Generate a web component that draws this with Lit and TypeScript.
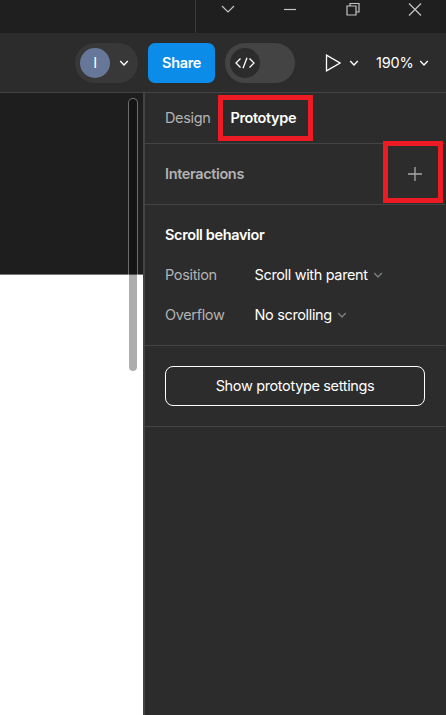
import { LitElement, html, css, svg } from "lit";
import { customElement } from "lit/decorators.js";

const chevron = (cls: string) => html`<svg class=${cls} width="10" height="6" viewBox="0 0 10 6">
  <path d="M1.200 1.100L5 4.900l3.800-3.800" fill="none" stroke="currentColor" stroke-width="1.400" /></svg>`;

@customElement("app-root")
export class AppRoot extends LitElement {
  static styles = css`
    :host {
      display: flex; flex-direction: column; position: relative;
      width: 446px; height: 715px; overflow: hidden; background: #2c2c2c; color: #fff;
      font: 420 14.5px/20px Inter, "Liberation Sans", sans-serif; letter-spacing: -0.35px; white-space: nowrap;
    }
    * { box-sizing: border-box; }
    svg { display: block; flex: none; }
    .titlebar { display: flex; height: 33px; background: #1f1f1f; flex: none; }
    .drag { flex: none; width: 196px; border-right: 1px solid #393939; }
    .window { display: flex; gap: 48.5px; padding: 1px 0 0 24.5px; color: #c4c4c4; }
    .toolbar { display: flex; align-items: center; height: 60px; padding-left: 75px; border-bottom: 1px solid #444; flex: none; }
    .user { display: flex; align-items: center; width: 63px; height: 40px; border-radius: 20px; background: #383838; padding-left: 5px; }
    .avatar { width: 30px; height: 30px; border-radius: 50%; background: #667799; text-align: center; line-height: 30px; margin-right: 9px; }
    .share { width: 67px; height: 40px; border-radius: 7px; background: #0c8ce9; text-align: center; line-height: 40px; font-weight: 600; margin: 0 10px; }
    .toggle { display: flex; align-items: center; width: 70px; height: 40px; border-radius: 20px; background: #444; padding-left: 5px; }
    .knob { display: flex; align-items: center; justify-content: center; width: 30px; height: 30px; border-radius: 50%; background: #2c2c2c; }
    .play { margin: 0 8px 0 30px; }
    .zoom { margin: 0 6px 0 17px; width: 37px; letter-spacing: -0.15px; }
    .body { display: flex; flex: 1; }
    .canvas { position: relative; width: 143px; background: linear-gradient(#1e1e1e 181px, #777 181px 182px, #fff 182px); }
    .scroll { position: absolute; left: 128px; top: 5px; width: 10px; height: 274px; border-radius: 5px;
      border: 1px solid rgba(255,255,255,.35); background: rgba(0,0,0,.32); background-clip: padding-box; }
    .panel { flex: 1; border-left: 2px solid #444; padding-right: 1px; }
    .section { border-bottom: 1px solid #444; padding: 0 20px; }
    .tabs { display: flex; align-items: center; height: 51px; gap: 20px; }
    .muted { color: #b3b3b3; }
    .strong { font-weight: 600; letter-spacing: -0.37px; }
    .interactions { display: flex; align-items: center; justify-content: space-between; height: 61px; color: #b3b3b3; padding-right: 23px; }
    .behavior { height: 141px; padding-top: 20px; }
    .row { display: flex; align-items: center; height: 20px; margin-top: 20px; }
    .row .muted { width: 89.5px; }
    .small { color: #7f7f7f; margin-left: 5px; }
    .settings { height: 81px; padding-top: 20px; }
    .button { height: 40px; border: 1px solid #fff; border-radius: 8px; line-height: 38px; text-align: center; }
    .mark { position: absolute; border: 5px solid #ed1c24; }
    .mark-tab { left: 218px; top: 95px; width: 95px; height: 46px; }
    .mark-plus { left: 383px; top: 141px; width: 60px; height: 62px; }
  `;

  render() {
    const glyphs = [
      svg`<path d="M1 5l6 6 6-6" />`,
      svg`<path d="M1 8.500h12" />`,
      svg`<path d="M1 5h9v9H1zM4 5V2.500h9v8.500h-3" />`,
      svg`<path d="M1 2.500l12 12m0-12l-12 12" />`,
    ];
    return html`
      <div class="titlebar">
        <div class="drag"></div>
        <div class="window">
          ${glyphs.map((g) => html`<svg width="14" height="15" viewBox="0 0 14 15" fill="none" stroke="currentColor" stroke-width="1.200">${g}</svg>`)}
        </div>
      </div>
      <div class="toolbar">
        <div class="user"><div class="avatar">I</div>${chevron("")}</div>
        <div class="share"><span>Share</span></div>
        <div class="toggle"><div class="knob">
          <svg width="20" height="12" viewBox="0 0 20 12" fill="none" stroke="#fff" stroke-width="1.300"><path d="M5.500 1.500L1 6l4.500 4.500M14.500 1.500L19 6l-4.500 4.500M12 .8L8 11.200" /></svg>
        </div></div>
        <svg class="play" width="16" height="18" viewBox="0 0 16 18" fill="none" stroke="#fff" stroke-width="1.300"><path d="M1.500 1.200v15.600L15 9z" /></svg>
        ${chevron("")}
        <span class="zoom">190%</span>
        ${chevron("")}
      </div>
      <div class="body">
        <div class="canvas"><div class="scroll"></div></div>
        <div class="panel">
          <div class="section tabs"><span class="muted">Design</span><span class="strong">Prototype</span></div>
          <div class="section interactions"><span class="strong">Interactions</span>
            <svg width="14" height="14" viewBox="0 0 14 14" stroke="#a8a8a8" stroke-width="1.300"><path d="M7 0v14M0 7h14" /></svg>
          </div>
          <div class="section behavior">
            <div class="strong">Scroll behavior</div>
            <div class="row"><span class="muted">Position</span><span>Scroll with parent</span>${chevron("small")}</div>
            <div class="row"><span class="muted">Overflow</span><span>No scrolling</span>${chevron("small")}</div>
          </div>
          <div class="section settings"><div class="button">Show prototype settings</div></div>
        </div>
      </div>
      <div class="mark mark-tab"></div>
      <div class="mark mark-plus"></div>
    `;
  }
}
